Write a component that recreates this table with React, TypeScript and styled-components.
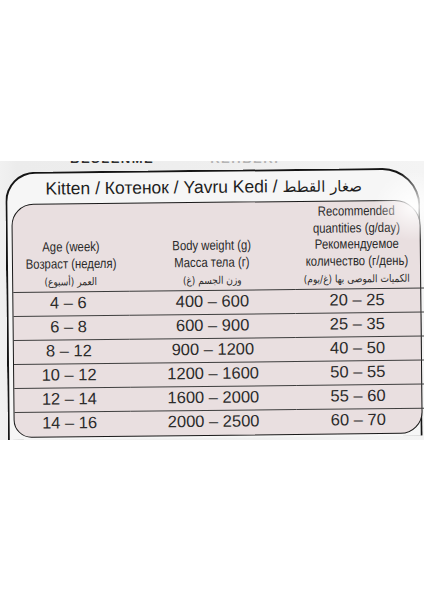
import React from 'react';
import styled, { createGlobalStyle } from 'styled-components';

const Global = createGlobalStyle`
  html, body {
    margin: 0;
    padding: 0;
    background: #ffffff;
  }
  body {
    font-family: "Liberation Sans", "DejaVu Sans", Arial, sans-serif;
    color: #262626;
  }
`;

const Photo = styled.div`
  position: relative;
  margin-top: 161px;
  height: 279px;
  background: linear-gradient(90deg, #f1f1f1 0%, #ececec 4%, #efefef 60%, #f4f4f4 100%);
  overflow: hidden;
  display: flex;
  flex-direction: column;

  &::after {
    content: '';
    position: absolute;
    right: -30px;
    top: 10px;
    width: 80px;
    height: 70px;
    background: radial-gradient(closest-side, rgba(255, 255, 255, 0.95), rgba(255, 255, 255, 0));
    pointer-events: none;
  }
`;

const CutLine = styled.div`
  height: 5px;
  overflow: hidden;
  display: flex;
  align-items: flex-end;
  gap: 56px;
  padding-left: 70px;
`;

const CutText = styled.span<{ $faded?: boolean }>`
  display: block;
  font-weight: 700;
  font-size: 13px;
  line-height: 13px;
  letter-spacing: 1.5px;
  margin-bottom: 1px;
  color: ${p => (p.$faded ? '#b5b5b5' : '#303030')};
`;

const Board = styled.div`
  margin: 6px 4px 0 5px;
  flex: 1;
  border: 2px solid #151515;
  border-bottom: none;
  border-radius: 30px 38px 0 0;
  background: #f6f6f6;
  padding-left: 4px;
  display: flex;
  flex-direction: column;
  transform: rotate(-0.6deg);
  transform-origin: left top;
`;

const Title = styled.div`
  height: 30px;
  line-height: 30px;
  text-align: center;
  direction: ltr;
  font-size: 17.5px;
  color: #1e1e1e;
  padding-right: 22px;
  white-space: nowrap;
  bdi {
    font-family: "DejaVu Sans", sans-serif;
    font-size: 15px;
    unicode-bidi: isolate;
  }
`;

const Table = styled.div`
  border: 1.6px solid #1a1a1a;
  border-radius: 22px 26px 22px 18px;
  background: #e9dfe0;
  display: grid;
  grid-template-columns: 116px 166px 1fr;
  margin-right: -2px;
`;

const HeadCell = styled.div<{ $pad?: number }>`
  height: 88px;
  display: flex;
  flex-direction: column;
  justify-content: flex-end;
  align-items: center;
  padding-right: ${p => p.$pad ?? 0}px;
  box-sizing: border-box;
  font-size: 13.5px;
  line-height: 16.5px;
  color: #2a2a2a;
  border-bottom: 1.4px solid #3a3a3a;
  span {
    display: inline-block;
    white-space: nowrap;
    transform: scaleX(0.84);
  }
  span[dir='rtl'] {
    font-family: "DejaVu Sans", sans-serif;
    font-size: 10.5px;
    line-height: 19px;
    transform: scaleX(0.86);
  }
`;

const Cell = styled.div<{ $pad?: number; $last?: boolean }>`
  height: 24px;
  display: flex;
  align-items: center;
  justify-content: center;
  padding-bottom: 3px;
  padding-right: ${p => p.$pad ?? 0}px;
  box-sizing: border-box;
  font-size: 16.5px;
  color: #2b2b2b;
  border-bottom: ${p => (p.$last ? 'none' : '1.4px solid #3f3f3f')};
`;

const rows = [
  ['4 – 6', '400 – 600', '20 – 25'],
  ['6 – 8', '600 – 900', '25 – 35'],
  ['8 – 12', '900 – 1200', '40 – 50'],
  ['10 – 12', '1200 – 1600', '50 – 55'],
  ['12 – 14', '1600 – 2000', '55 – 60'],
  ['14 – 16', '2000 – 2500', '60 – 70'],
];

export default function App() {
  return (
    <>
      <Global />
      <Photo>
        <CutLine>
          <CutText>BESLENME</CutText>
          <CutText $faded>REHBERİ</CutText>
        </CutLine>
        <Board>
          <Title dir="ltr">
            Kitten / Котенок / Yavru Kedi /{' '}
            <bdi dir="rtl">صغار القطط</bdi>
          </Title>
          <Table>
            <HeadCell>
              <span>Age (week)</span>
              <span>Возраст (неделя)</span>
              <span dir="rtl">العمر (أسبوع)</span>
            </HeadCell>
            <HeadCell>
              <span>Body weight (g)</span>
              <span>Масса тела (г)</span>
              <span dir="rtl">وزن الجسم (غ)</span>
            </HeadCell>
            <HeadCell $pad={14}>
              <span>Recommended</span>
              <span>quantities (g/day)</span>
              <span>Рекомендуемое</span>
              <span>количество (г/день)</span>
              <span dir="rtl">الكميات الموصى بها (غ/يوم)</span>
            </HeadCell>
            {rows.map((r, i) => (
              <React.Fragment key={i}>
                <Cell $pad={6} $last={i === rows.length - 1}>{r[0]}</Cell>
                <Cell $last={i === rows.length - 1}>{r[1]}</Cell>
                <Cell $pad={14} $last={i === rows.length - 1}>{r[2]}</Cell>
              </React.Fragment>
            ))}
          </Table>
        </Board>
      </Photo>
    </>
  );
}
